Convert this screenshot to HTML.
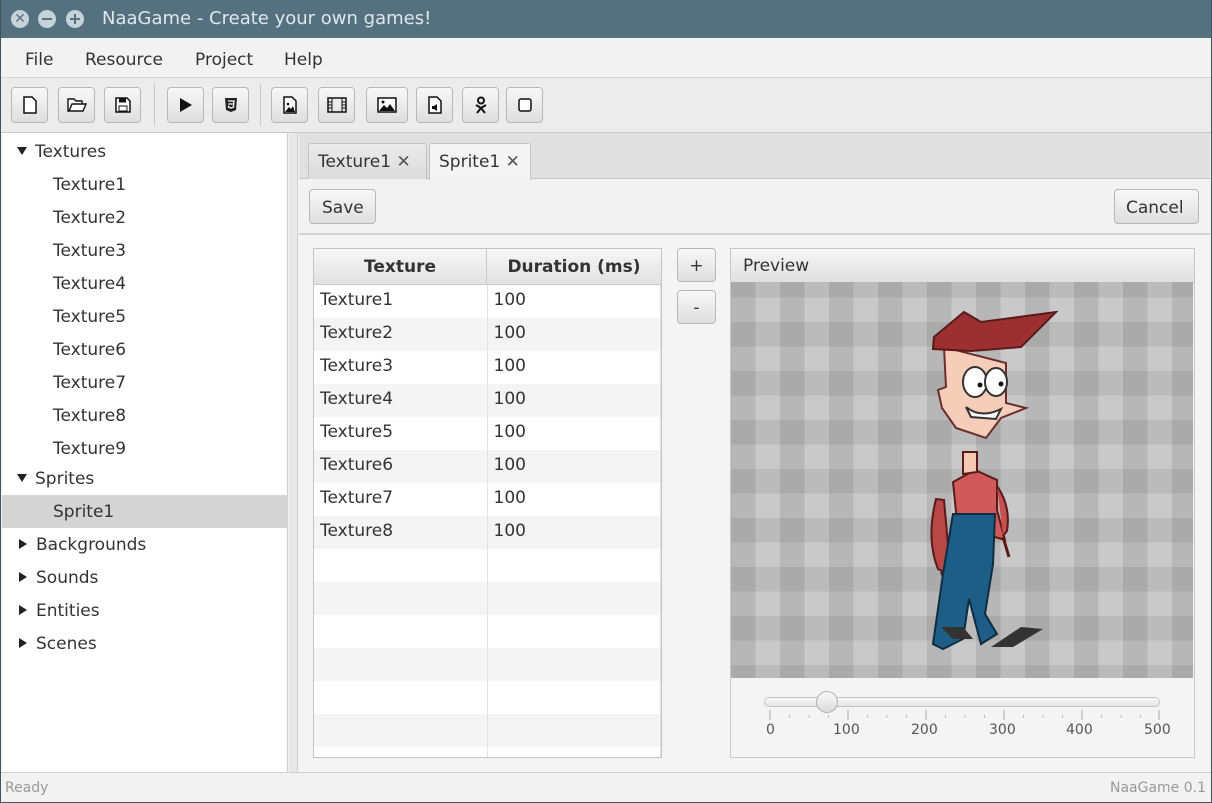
<!DOCTYPE html>
<html><head><style>
*{margin:0;padding:0;box-sizing:border-box}
body{width:1212px;height:803px;overflow:hidden;font-family:"DejaVu Sans","Liberation Sans",sans-serif;font-size:17px;color:#333;background:#f2f2f2;position:relative}
.a{position:absolute}
.title{left:0;top:0;width:1212px;height:38px;background:#557180;color:#dfe7ec;font-size:18px}
.menu{left:0;top:38px;width:1212px;height:40px;background:#f2f2f2;border-bottom:1px solid #d4d4d4}
.menu span{position:absolute;top:12px}
.tb{left:0;top:78px;width:1212px;height:55px;background:#ececec;border-bottom:1px solid #c8c8c8}
.btn{position:absolute;border:1px solid #b8b8b8;border-radius:4px;background:linear-gradient(#f8f8f8,#dedede);}
.tbb{top:9px;width:37px;height:36px;display:flex;align-items:center;justify-content:center}
.tree{left:2px;top:133px;width:286px;height:639px;background:#fff;border-right:1px solid #ccc}
.tree div{position:absolute;height:33px;line-height:33px}
.tri{display:inline-block;width:0;height:0}
.td{border-left:5px solid transparent;border-right:5px solid transparent;border-top:8px solid #222;margin:0 8px 2px 15px;vertical-align:middle}
.tr{border-top:5px solid transparent;border-bottom:5px solid transparent;border-left:8px solid #222;margin:0 9px 2px 17px;vertical-align:middle}
.tab{position:absolute;top:10px;height:36px;border:1px solid #c2c2c2;border-bottom:none;border-radius:3px 3px 0 0;padding:8px 0 0 9px}
table{border-collapse:collapse}
.grid td{height:33px;border-right:1px solid #e2e2e2;padding-left:6px;padding-bottom:3px}
</style></head><body>
<div class="a title">
 <div class="a" style="left:11px;top:10px;width:18px;height:18px;border-radius:50%;background:#c6d2d8;color:#557180;font-size:14px;text-align:center;line-height:18px;font-weight:bold">✕</div>
 <div class="a" style="left:38px;top:10px;width:18px;height:18px;border-radius:50%;background:#c6d2d8"><div class="a" style="left:4px;top:8px;width:10px;height:2px;background:#557180"></div></div>
 <div class="a" style="left:66px;top:10px;width:18px;height:18px;border-radius:50%;background:#c6d2d8"><div class="a" style="left:4px;top:8px;width:10px;height:2px;background:#557180"></div><div class="a" style="left:8px;top:4px;width:2px;height:10px;background:#557180"></div></div>
 <div class="a" style="left:102px;top:8px">NaaGame - Create your own games!</div>
</div>
<div class="a menu"><span style="left:25px">File</span><span style="left:85px">Resource</span><span style="left:195px">Project</span><span style="left:284px">Help</span></div>
<div class="a tb">
 <div class="btn tbb" style="left:11px"><svg width="14" height="18"><path d="M1 1h8l4 4v12H1z" fill="#fff" stroke="#111" stroke-width="1.5"/></svg></div>
 <div class="btn tbb" style="left:58px"><svg width="20" height="16"><path d="M1 2h6l2 2h6v3H5L2 14H1zM5 7h14l-3 7H2z" fill="#fff" stroke="#111" stroke-width="1.4"/></svg></div>
 <div class="btn tbb" style="left:104px"><svg width="16" height="16"><path d="M1 1h11l3 3v11H1z" fill="#fff" stroke="#111" stroke-width="1.5"/><rect x="4" y="1.5" width="7" height="4" fill="#111"/><rect x="4" y="9" width="8" height="5" fill="none" stroke="#111"/></svg></div>
 <div class="a" style="left:154px;top:6px;width:1px;height:42px;background:#c8c8c8"></div>
 <div class="btn tbb" style="left:167px"><svg width="14" height="16"><path d="M1 1l12 7-12 7z" fill="#111"/></svg></div>
 <div class="btn tbb" style="left:212px"><svg width="14" height="16"><path d="M1 1h12l-1 12-5 2-5-2z" fill="#222"/><path d="M4 4h6l-.5 6-2.5 1-2.5-1v-1.5M4.3 7h5" stroke="#fff" stroke-width="1.3" fill="none"/></svg></div>
 <div class="a" style="left:260px;top:6px;width:1px;height:42px;background:#c8c8c8"></div>
 <div class="btn tbb" style="left:271px"><svg width="14" height="18"><path d="M1 1h8l4 4v12H1z" fill="#fff" stroke="#111" stroke-width="1.5"/><path d="M2 16l4-5 2 2 2-3 2 6z" fill="#111"/><circle cx="5" cy="8" r="1.3" fill="#111"/></svg></div>
 <div class="btn tbb" style="left:318px"><svg width="20" height="16"><rect x="1" y="1" width="18" height="14" fill="none" stroke="#111" stroke-width="1.5"/><path d="M5 1v14M15 1v14M1 5h4M1 8h4M1 11h4M15 5h4M15 8h4M15 11h4" stroke="#111"/></svg></div>
 <div class="btn tbb" style="left:366px;width:42px"><svg width="20" height="16"><rect x="1" y="1" width="18" height="14" fill="#fff" stroke="#111" stroke-width="1.5"/><path d="M2 14l5-6 3 3 3-4 5 7z" fill="#111"/><circle cx="6" cy="5" r="1.5" fill="#111"/></svg></div>
 <div class="btn tbb" style="left:416px"><svg width="14" height="18"><path d="M1 1h8l4 4v12H1z" fill="#fff" stroke="#111" stroke-width="1.5"/><path d="M4 10h2l3-2v7l-3-2H4z" fill="#111"/></svg></div>
 <div class="btn tbb" style="left:462px"><svg width="14" height="18"><circle cx="7" cy="4.5" r="3" fill="none" stroke="#111" stroke-width="2"/><path d="M2 9l5 3 5-3M7 12l-4 5M7 12l4 5" stroke="#111" stroke-width="2" fill="none"/></svg></div>
 <div class="btn tbb" style="left:506px"><svg width="14" height="14"><rect x="1" y="1" width="12" height="12" rx="2" fill="#fff" stroke="#111" stroke-width="1.5"/></svg></div>
</div>
<div class="a tree">
 <div style="top:3px;left:0"><span class="tri td"></span>Textures</div>
 <div style="top:36px;left:51px">Texture1</div><div style="top:69px;left:51px">Texture2</div><div style="top:102px;left:51px">Texture3</div><div style="top:135px;left:51px">Texture4</div><div style="top:168px;left:51px">Texture5</div><div style="top:201px;left:51px">Texture6</div><div style="top:234px;left:51px">Texture7</div><div style="top:267px;left:51px">Texture8</div><div style="top:300px;left:51px">Texture9</div>
 <div style="top:330px;left:0"><span class="tri td"></span>Sprites</div>
 <div style="top:362px;left:0;width:286px;background:#d4d4d4;padding-left:51px;line-height:35px">Sprite1</div>
 <div style="top:396px;left:0"><span class="tri tr"></span>Backgrounds</div>
 <div style="top:429px;left:0"><span class="tri tr"></span>Sounds</div>
 <div style="top:462px;left:0"><span class="tri tr"></span>Entities</div>
 <div style="top:495px;left:0"><span class="tri tr"></span>Scenes</div>
</div>
<div class="a" style="left:289px;top:133px;width:9px;height:639px;background:#e8e8e8;border-right:1px solid #cfcfcf"></div>
<div class="a" style="left:299px;top:133px;width:911px;height:46px;background:#e0e0e0;border-bottom:1px solid #c6c6c6">
 <div class="tab" style="left:9px;width:119px;background:linear-gradient(#eaeaea,#dcdcdc)">Texture1 <span style="color:#555">✕</span></div>
 <div class="tab" style="left:130px;width:102px;height:37px;background:#f4f4f4">Sprite1 <span style="color:#555">✕</span></div>
</div>
<div class="a" style="left:299px;top:180px;width:911px;height:55px;background:#f2f2f2;border-bottom:2px solid #d2d2d2">
 <div class="btn" style="left:10px;top:9px;width:67px;height:35px;padding:8px 0 0 12px">Save</div>
 <div class="btn" style="left:815px;top:9px;width:85px;height:35px;padding:8px 0 0 11px">Cancel</div>
</div>
<div class="a" style="left:299px;top:236px;width:911px;height:536px;background:#f4f4f4"></div>
<div class="a" style="left:313px;top:248px;width:349px;height:510px;border:1px solid #c4c4c4;background:#fff;overflow:hidden">
 <div style="height:36px;display:flex;background:linear-gradient(#f6f6f6,#e2e2e2);border-bottom:1px solid #c8c8c8;font-weight:bold;line-height:37px;text-align:center">
  <div style="width:173px;border-right:1px solid #c8c8c8">Texture</div><div style="width:174px">Duration (ms)</div></div>
 <table class="grid" style="width:347px">
  <colgroup><col style="width:173px"><col></colgroup>
  <tr><td>Texture1</td><td>100</td></tr>
  <tr style="background:#f4f4f4"><td>Texture2</td><td>100</td></tr>
  <tr><td>Texture3</td><td>100</td></tr>
  <tr style="background:#f4f4f4"><td>Texture4</td><td>100</td></tr>
  <tr><td>Texture5</td><td>100</td></tr>
  <tr style="background:#f4f4f4"><td>Texture6</td><td>100</td></tr>
  <tr><td>Texture7</td><td>100</td></tr>
  <tr style="background:#f4f4f4"><td>Texture8</td><td>100</td></tr>
  <tr><td></td><td></td></tr><tr style="background:#f4f4f4"><td></td><td></td></tr><tr><td></td><td></td></tr><tr style="background:#f4f4f4"><td></td><td></td></tr><tr><td></td><td></td></tr><tr style="background:#f4f4f4"><td></td><td></td></tr><tr><td></td><td></td></tr>
 </table>
</div>
<div class="btn" style="left:677px;top:248px;width:39px;height:34px;text-align:center;line-height:34px">+</div>
<div class="btn" style="left:677px;top:290px;width:39px;height:34px;text-align:center;line-height:34px">-</div>
<div class="a" style="left:730px;top:248px;width:465px;height:510px;border:1px solid #c8c8c8;background:#f4f4f4">
 <div style="height:34px;background:linear-gradient(#f6f6f6,#e0e0e0);border-bottom:1px solid #c8c8c8;padding:7px 0 0 12px">Preview</div>
 <div class="a" style="left:0;top:33px;width:462px;height:396px;background-color:#c9c9c9;background-image:linear-gradient(90deg,rgba(0,0,0,.09) 50%,transparent 50%),linear-gradient(rgba(0,0,0,.07) 50%,transparent 50%);background-size:49px 49px;background-position:0 0,0 -9px">
  <svg width="462" height="396" style="position:absolute;left:0;top:0">
   <path d="M205 217q-10 40 2 70l8 4 4-5-6-68z" fill="#b84848" stroke="#5a1a1a" stroke-width="2"/>
   <path d="M210 290l6 15 4-4" fill="#f3c7b0" stroke="#5a1a1a" stroke-width="2"/>
   <path d="M225 230l-3 -30 22-12 22 10 0 30 8 30-10-3-2 2-3-20-8 32-30 0z" fill="#d05a5a" stroke="#5a1a1a" stroke-width="2"/>
   <path d="M222 232h42l-2 50 -8 50 12 20-16 10-12-45-6 40-20 10 -10-5 10-70z" fill="#1e5e86" stroke="#0d2d40" stroke-width="2"/>
   <path d="M210 345l22 0 10 12-20 0zM260 365l30-20 22 2-30 18z" fill="#333"/>
   <path d="M266 204q14 20 10 45l-4 5" fill="#c85050" stroke="#5a1a1a" stroke-width="2"/>
   <path d="M272 255l6 20" stroke="#5a1a1a" stroke-width="3" fill="none"/>
   <path d="M232 170l0 22 14 -2 0-20z" fill="#f3c7b0" stroke="#5a1a1a" stroke-width="2"/>
   <path d="M213 65l2 40-8 3 4 18 14 20 30 10 15-20 25-10-20-5 0-40z" fill="#f6cdb8" stroke="#6b2e2e" stroke-width="2"/>
   <ellipse cx="244" cy="100" rx="12" ry="15" fill="#fff" stroke="#333" stroke-width="2"/>
   <ellipse cx="265" cy="100" rx="11" ry="14" fill="#fff" stroke="#333" stroke-width="2"/>
   <circle cx="249" cy="103" r="2.5" fill="#111"/><circle cx="270" cy="102" r="2.5" fill="#111"/>
   <path d="M235 125q15 12 35 2l-5 10-25-2z" fill="#fff" stroke="#333" stroke-width="2"/>
   <path d="M203 55l30-25 17 10 75-10-35 35-50 4-38-2z" fill="#9c3030" stroke="#5a1a1a" stroke-width="2"/>
  </svg>
 </div>
 <div class="a" style="left:33px;top:448px;width:396px;height:10px;border:1px solid #c4c4c4;border-radius:5px;background:linear-gradient(#f8f8f8,#e6e6e6)"></div>
 <div class="a" style="left:85px;top:442px;width:22px;height:22px;border:1px solid #b0b0b0;border-radius:50%;background:linear-gradient(#fafafa,#dadada)"></div>
 <svg class="a" style="left:0;top:460px" width="462" height="12"><path d="M39 1v10M117 1v10M195 1v10M273 1v10M351 1v10M428 1v10" stroke="#aaa"/><path d="M58.5 6v3M78 6v3M97.5 6v3M136.5 6v3M156 6v3M175.5 6v3M214.5 6v3M234 6v3M253.5 6v3M292.5 6v3M312 6v3M331.5 6v3M370.5 6v3M390 6v3M409.5 6v3" stroke="#bbb"/></svg>
 <div class="a" style="top:473px;left:0;width:462px;font-size:14px;color:#555">
  <span class="a" style="left:35px">0</span><span class="a" style="left:102px">100</span><span class="a" style="left:180px">200</span><span class="a" style="left:258px">300</span><span class="a" style="left:335px">400</span><span class="a" style="left:413px">500</span>
 </div>
</div>
<div class="a" style="left:0;top:772px;width:1212px;height:31px;background:#f2f2f2;border-top:1px solid #d0d0d0;font-size:14px;color:#999">
 <span class="a" style="left:5px;top:7px">Ready</span><span class="a" style="right:6px;top:7px">NaaGame 0.1</span>
</div>
<div class="a" style="left:0;top:0;width:1212px;height:803px;border:1px solid #3f555f;border-top:none;pointer-events:none"></div>
</body></html>
